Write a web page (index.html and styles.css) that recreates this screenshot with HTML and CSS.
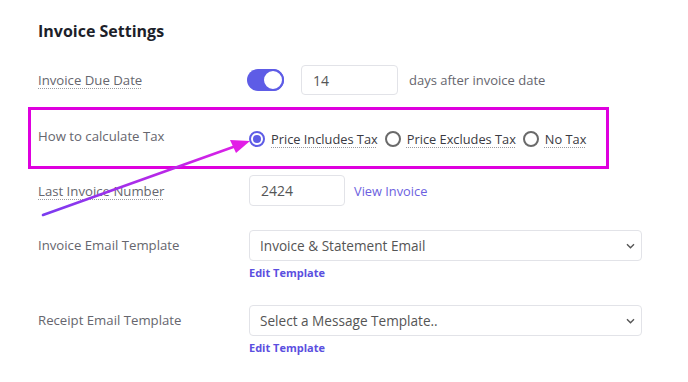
FILE: index.html
```html
<!DOCTYPE html>
<html>
<head>
<meta charset="utf-8">
<link rel="stylesheet" href="styles.css">
</head>
<body>
<div class="page">
  <h1 class="title">Invoice Settings</h1>

  <div class="row row-due">
    <span class="label dotted">Invoice Due Date</span>
    <div class="controls">
      <span class="toggle"><span class="knob"></span></span>
      <span class="input input-days">14</span>
      <span class="muted">days after invoice date</span>
    </div>
  </div>

  <div class="row row-tax">
    <span class="label">How to calculate Tax</span>
    <div class="controls radios">
      <span class="radio-item"><span class="radio checked"></span><span class="dotted dark">Price Includes Tax</span></span>
      <span class="radio-item"><span class="radio"></span><span class="dotted dark">Price Excludes Tax</span></span>
      <span class="radio-item"><span class="radio"></span><span class="dotted dark">No Tax</span></span>
    </div>
  </div>

  <div class="row row-last">
    <span class="label dotted">Last Invoice Number</span>
    <div class="controls">
      <span class="input input-num">2424</span>
      <span class="link">View Invoice</span>
    </div>
  </div>

  <div class="row row-email">
    <span class="label">Invoice Email Template</span>
    <div class="stack">
      <div class="select"><span>Invoice &amp; Statement Email</span>
        <svg class="chev" width="9" height="6" viewBox="0 0 9 6"><path d="M1 1.2l3.5 3.5 3.5-3.5" fill="none" stroke="#555" stroke-width="1.4"/></svg>
      </div>
      <span class="edit">Edit Template</span>
    </div>
  </div>

  <div class="row row-receipt">
    <span class="label">Receipt Email Template</span>
    <div class="stack">
      <div class="select"><span>Select a Message Template..</span>
        <svg class="chev" width="9" height="6" viewBox="0 0 9 6"><path d="M1 1.2l3.5 3.5 3.5-3.5" fill="none" stroke="#555" stroke-width="1.4"/></svg>
      </div>
      <span class="edit">Edit Template</span>
    </div>
  </div>

  <div class="highlight"></div>
  <svg class="arrow" width="688" height="382" viewBox="0 0 688 382">
    <defs>
      <linearGradient id="ag" x1="43" y1="215" x2="250" y2="141" gradientUnits="userSpaceOnUse">
        <stop offset="0" stop-color="#7a3cf0"/>
        <stop offset="0.5" stop-color="#b02ae8"/>
        <stop offset="1" stop-color="#e21ee6"/>
      </linearGradient>
    </defs>
    <line x1="43" y1="215" x2="236" y2="146" stroke="url(#ag)" stroke-width="2.6" stroke-linecap="round"/>
    <polygon points="250,141 230,140 236,153" fill="#e21ee6"/>
  </svg>
</div>
</body>
</html>
```

FILE: styles.css
```css
* { box-sizing: border-box; }
html, body { margin: 0; padding: 0; background: #fff; }
body {
  width: 688px;
  height: 382px;
  overflow: hidden;
  font-family: "Open Sans", "Noto Sans", sans-serif;
  color: #555;
}
.page {
  position: relative;
  height: 382px;
  padding: 20px 0 0 38px;
}
.title {
  margin: 0;
  font-size: 16px;
  line-height: 22px;
  font-weight: 700;
  color: #1d1f2a;
}
.row {
  display: grid;
  grid-template-columns: 211px 1fr;
  align-items: center;
}
.label {
  font-size: 13.2px;
  color: #66666e;
  justify-self: start;
}
.dotted {
  text-decoration: underline dotted #9a9aa0;
  text-underline-offset: 3px;
  text-decoration-thickness: 1px;
}
.controls {
  display: flex;
  align-items: center;
}
.row-due { margin-top: 23px; height: 30px; }
.toggle {
  position: relative;
  width: 37px;
  height: 22px;
  border-radius: 11px;
  background: #5e5ce6;
  margin-left: -2px;
  margin-right: 17px;
}
.knob {
  position: absolute;
  right: 0;
  top: 0;
  width: 22px;
  height: 22px;
  border-radius: 50%;
  background: #fff;
  border: 2px solid #5e5ce6;
}
.input {
  display: flex;
  align-items: center;
  height: 30px;
  border: 1px solid #e2e3e8;
  border-radius: 4px;
  padding-left: 11px;
  font-size: 14px;
  color: #555;
}
.input-days { width: 97px; margin-right: 11px; }
.muted { font-size: 13px; color: #66666e; }
.row-tax { margin-top: 35px; height: 24px; align-items: start; }
.row-tax .label { margin-top: -3px; }
.radio-item {
  display: flex;
  align-items: center;
  font-size: 12.8px;
  margin-right: 7px;
}
.dark { color: #3a3a42; }
.radio {
  width: 16px;
  height: 16px;
  border-radius: 50%;
  border: 2px solid #6a6a6a;
  margin-right: 6px;
  position: relative;
  flex: none;
}
.radio.checked { border-color: #5e5ce6; }
.radio.checked::after {
  content: "";
  position: absolute;
  left: 2px;
  top: 2px;
  width: 8px;
  height: 8px;
  border-radius: 50%;
  background: #5e5ce6;
}
.row-last { margin-top: 21px; height: 31px; }
.input-num { width: 96px; height: 31px; margin-right: 9px; }
.link { font-size: 12.8px; color: #6c5fe0; }
.row-email { margin-top: 24px; align-items: start; }
.row-receipt { margin-top: 25px; align-items: start; }
.row-email .label, .row-receipt .label { margin-top: 6px; }
.stack { display: flex; flex-direction: column; align-items: flex-start; }
.select {
  width: 393px;
  height: 31px;
  border: 1px solid #e2e3e8;
  border-radius: 4px;
  display: flex;
  align-items: center;
  justify-content: space-between;
  padding: 0 6px 0 10px;
  font-size: 13.6px;
  color: #555;
}
.edit {
  margin-top: 4px;
  font-size: 11px;
  font-weight: 700;
  color: #5b4fe0;
}
.highlight {
  position: absolute;
  left: 28px;
  top: 107px;
  width: 581px;
  height: 62px;
  border: 3px solid #de00de;
}
.arrow {
  position: absolute;
  left: 0;
  top: 0;
  pointer-events: none;
}
```
